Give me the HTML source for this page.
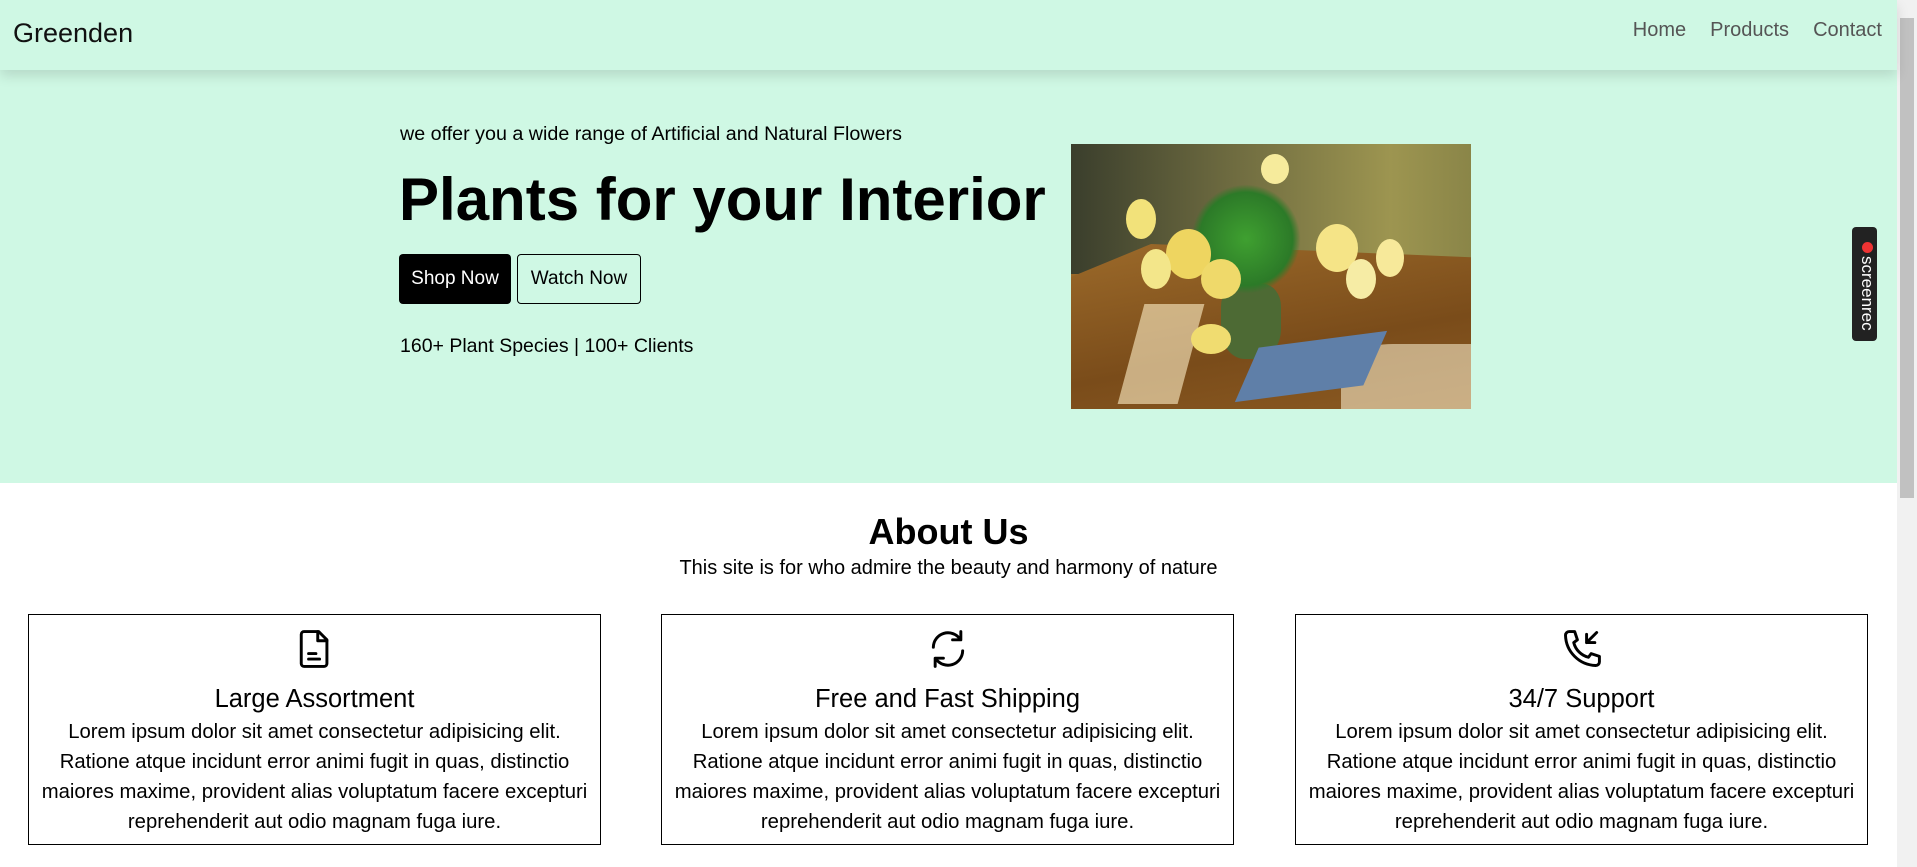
<!DOCTYPE html>
<html><head><meta charset="utf-8"><style>
*{margin:0;padding:0;box-sizing:border-box}
body{width:1917px;height:867px;overflow:hidden;font-family:"Liberation Sans",sans-serif;background:#fff;position:relative;color:#000}
.hdr{position:absolute;left:0;top:0;width:1897px;height:70px;background:#cff8e4;box-shadow:0 6px 12px rgba(0,0,0,.12);z-index:2}
.logo{position:absolute;left:13px;top:18px;font-size:27px;color:#111}
.nav{position:absolute;right:15px;top:19px;font-size:20px;color:#555}
.nav span{margin-left:24px}
.hero{position:absolute;left:0;top:0;width:1897px;height:483px;background:#cff8e4}
.sub{position:absolute;left:400px;top:123px;font-size:19.7px}
h1{position:absolute;left:399px;top:165px;font-size:60px;font-weight:bold;white-space:nowrap}
.btn{position:absolute;top:254px;height:50px;font-size:19px;border-radius:4px;display:flex;align-items:center;justify-content:center}
.stats{position:absolute;left:400px;top:335px;font-size:19.5px}
.img{position:absolute;left:1071px;top:144px;width:400px;height:265px;overflow:hidden;background:linear-gradient(180deg,#6f6a3d 0%,#8a8545 35%,#9a6a2a 45%,#8a5a20 100%)}
.scroll{position:absolute;right:0;top:0;width:20px;height:867px;background:#f1f1f1}
.thumb{position:absolute;right:3px;top:18px;width:14px;height:480px;background:#c1c1c1}
.rec{position:absolute;left:1852px;top:227px;width:25px;height:114px;background:#222;border-radius:4px;color:#fff;font-size:17px;writing-mode:vertical-rl;padding-top:4px;text-align:center}
.t2{position:absolute;left:0;width:1897px;text-align:center}
.card{position:absolute;top:614px;width:573px;height:231px;border:1px solid #000;text-align:center}
.card svg{position:absolute;left:264px;top:12px}
.card h3{position:absolute;left:0;right:0;top:70px;font-size:25.5px;font-weight:normal}
.card p{position:absolute;left:10px;right:10px;top:102px;font-size:20.3px;line-height:30px}
</style></head><body>
<div class="hero">
<div class="sub">we offer you a wide range of Artificial and Natural Flowers</div>
<h1>Plants for your Interior</h1>
<div class="btn" style="left:399px;width:112px;background:#000;color:#fff">Shop Now</div>
<div class="btn" style="left:517px;width:124px;border:1px solid #000">Watch Now</div>
<div class="stats">160+ Plant Species | 100+ Clients</div>
<div class="img">
<div style="position:absolute;left:0;top:0;width:400px;height:130px;background:linear-gradient(90deg,#3a3e2c,#6e6b40 40%,#9d9550 80%,#8a8548)"></div>
<div style="position:absolute;left:0;top:100px;width:400px;height:165px;background:linear-gradient(170deg,#9c6a2a,#7a4c1a 60%,#8b5a22);clip-path:polygon(20% 0,100% 8%,100% 100%,0 100%,0 20%)"></div>
<div style="position:absolute;left:60px;top:160px;width:60px;height:100px;background:rgba(255,240,200,.6);transform:skewX(-15deg)"></div>
<div style="position:absolute;left:270px;top:200px;width:130px;height:65px;background:rgba(255,245,215,.55);border-radius:40% 0 0 0"></div>
<div style="position:absolute;left:150px;top:140px;width:60px;height:75px;background:#4d6a34;border-radius:30% 30% 40% 40%"></div>
<div style="position:absolute;left:180px;top:195px;width:120px;height:55px;background:#5f7fa8;transform:skewX(-30deg) rotate(-8deg)"></div>
<div style="position:absolute;left:120px;top:40px;width:110px;height:110px;background:radial-gradient(#3fa030,#2c7a28 60%,transparent 70%)"></div>
<div style="position:absolute;left:55px;top:55px;width:30px;height:40px;background:#f2e27a;border-radius:50%"></div>
<div style="position:absolute;left:95px;top:85px;width:45px;height:50px;background:#eed560;border-radius:50%"></div>
<div style="position:absolute;left:70px;top:105px;width:30px;height:40px;background:#f3e68a;border-radius:50%"></div>
<div style="position:absolute;left:130px;top:115px;width:40px;height:40px;background:#efd96a;border-radius:50%"></div>
<div style="position:absolute;left:190px;top:10px;width:28px;height:30px;background:#f6eb9c;border-radius:50%"></div>
<div style="position:absolute;left:245px;top:80px;width:42px;height:48px;background:#f5e487;border-radius:50%"></div>
<div style="position:absolute;left:275px;top:115px;width:30px;height:40px;background:#f6eca5;border-radius:50%"></div>
<div style="position:absolute;left:305px;top:95px;width:28px;height:38px;background:#f7e99a;border-radius:50%"></div>
<div style="position:absolute;left:120px;top:180px;width:40px;height:30px;background:#f0dc70;border-radius:50%"></div>
</div>
</div>
<div class="hdr"><div class="logo">Greenden</div><div class="nav"><span>Home</span><span>Products</span><span>Contact</span></div></div>
<div class="rec"><span style="display:inline-block;width:11px;height:11px;border-radius:50%;background:#e33;margin-bottom:3px"></span>screenrec</div>
<div class="t2" style="top:511px;font-size:36px;font-weight:bold">About Us</div>
<div class="t2" style="top:557px;font-size:20px">This site is for who admire the beauty and harmony of nature</div>
<div class="card" style="left:28px">
<svg width="44" height="44" viewBox="0 0 24 24" fill="none" stroke="#000" stroke-width="1.6" stroke-linejoin="round" stroke-linecap="round"><path d="M6 2.5h8l4.5 4.5v13a1.5 1.5 0 0 1-1.5 1.5H6A1.5 1.5 0 0 1 4.5 20V4A1.5 1.5 0 0 1 6 2.5z"/><path d="M13.5 2.5V7.5h5"/><path d="M8.5 14.5h4M8.5 17.5h6"/></svg>
<h3>Large Assortment</h3>
<p>Lorem ipsum dolor sit amet consectetur adipisicing elit. Ratione atque incidunt error animi fugit in quas, distinctio maiores maxime, provident alias voluptatum facere excepturi reprehenderit aut odio magnam fuga iure.</p></div>
<div class="card" style="left:661px">
<svg width="44" height="44" viewBox="0 0 24 24" fill="none" stroke="#000" stroke-width="1.6" stroke-linecap="round" stroke-linejoin="round"><path d="M4 11a8 8 0 0 1 14.5-4.5"/><path d="M19 2.5v4.5h-4.5"/><path d="M20 13a8 8 0 0 1-14.5 4.5"/><path d="M5 21.5V17h4.5"/></svg>
<h3>Free and Fast Shipping</h3>
<p>Lorem ipsum dolor sit amet consectetur adipisicing elit. Ratione atque incidunt error animi fugit in quas, distinctio maiores maxime, provident alias voluptatum facere excepturi reprehenderit aut odio magnam fuga iure.</p></div>
<div class="card" style="left:1295px">
<svg width="44" height="44" viewBox="0 0 24 24" fill="none" stroke="#000" stroke-width="1.6" stroke-linecap="round" stroke-linejoin="round"><path d="M5 2.5h3l1.5 4.5-2 1.5a11 11 0 0 0 8 8l1.5-2 4.5 1.5v3a2 2 0 0 1-2 2A17 17 0 0 1 3 4.5a2 2 0 0 1 2-2z"/><path d="M20 3l-5.5 5.5M14.5 4v4.5H19"/></svg>
<h3>34/7 Support</h3>
<p>Lorem ipsum dolor sit amet consectetur adipisicing elit. Ratione atque incidunt error animi fugit in quas, distinctio maiores maxime, provident alias voluptatum facere excepturi reprehenderit aut odio magnam fuga iure.</p></div>
<div class="scroll"><div class="thumb"></div></div>
</body></html>
